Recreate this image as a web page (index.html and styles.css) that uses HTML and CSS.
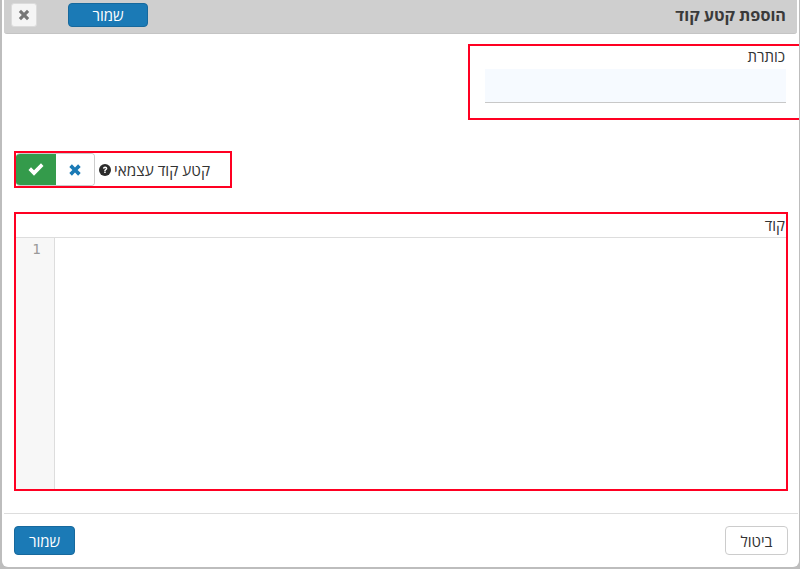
FILE: index.html
```html
<!DOCTYPE html>
<html lang="he" dir="rtl">
<head>
<meta charset="utf-8">
<title>הוספת קטע קוד</title>
<link rel="stylesheet" href="styles.css">
</head>
<body>
<div class="dialog">
  <header class="head">
    <h1 class="title">הוספת קטע קוד</h1>
    <div class="head-actions">
      <button class="btn primary small" type="button">שמור</button>
      <button class="close" type="button" aria-label="סגור">
        <svg viewBox="0 0 12 12" width="12" height="12"><path d="M.8 3 3 .8 6 3.800 9 .8 11.200 3 8.200 6 11.200 9 9 11.200 6 8.200 3 11.200 .8 9 3.800 6Z"/></svg>
      </button>
    </div>
  </header>
  <main class="body">
    <section class="field-title">
      <label class="label">כותרת</label>
      <div class="input"></div>
    </section>
    <section class="field-toggle">
      <span class="toggle-label">קטע קוד עצמאי</span>
      <svg class="help" viewBox="0 0 12 12" width="12" height="12"><circle cx="6" cy="6" r="6" fill="#2b2b2b"/><path d="M3.900 4.600C4 3.400 4.900 2.600 6.100 2.600 7.400 2.600 8.300 3.400 8.300 4.500 8.300 5.300 7.800 5.700 7.200 6.100 6.800 6.400 6.700 6.500 6.700 7H5.200C5.200 6.200 5.500 5.800 6.100 5.300 6.600 5 6.800 4.800 6.800 4.500 6.800 4.100 6.500 3.900 6.100 3.900 5.600 3.900 5.400 4.200 5.300 4.700ZM5.200 7.600H6.700V9.100H5.200Z" fill="#fff"/></svg>
      <div class="toggle">
        <span class="opt off">
          <svg viewBox="0 0 12 12" width="12" height="12"><path d="M.3 2.900 2.900.3 6 3.400 9.100.3 11.700 2.900 8.600 6 11.700 9.100 9.100 11.700 6 8.600 2.900 11.700.3 9.100 3.400 6Z"/></svg>
        </span>
        <span class="opt on">
          <svg viewBox="0 0 16 13" width="16" height="13"><path d="M.5 7 3 4.300 6 7.300 13 .3 15.500 3 6 12.700Z"/></svg>
        </span>
      </div>
    </section>
    <section class="field-code">
      <label class="label code-label">קוד</label>
      <div class="editor">
        <div class="gutter">1</div>
        <div class="code"></div>
      </div>
    </section>
  </main>
  <footer class="foot">
    <button class="btn cancel" type="button">ביטול</button>
    <button class="btn primary" type="button">שמור</button>
  </footer>
</div>
</body>
</html>
```
FILE: styles.css
```css
* { box-sizing: border-box; }
html, body { height: 100%; }
body {
  margin: 0;
  background: #bdbdbd;
  font-family: "Open Sans", "Liberation Sans", sans-serif;
  color: #333;
  overflow: hidden;
}
.dialog {
  height: 567px;
  margin: 0 1px 0 2px;
  padding: 0 2px;
  background: #fff;
  border-radius: 0 0 6px 6px;
  display: flex;
  flex-direction: column;
  overflow: hidden;
}
.head {
  height: 34px;
  flex: none;
  background: #cfcfcf;
  border-bottom: 1px solid #c4c4c4;
  border-radius: 0 0 3px 3px;
  display: flex;
  align-items: center;
  justify-content: space-between;
  padding: 0 11px 4px 7px;
}
.title {
  margin: 0;
  font-size: 16.2px;
  font-weight: 700;
  color: #3a3a3a;
}
.head-actions {
  display: flex;
  align-items: center;
  gap: 31px;
}
.btn {
  font-family: inherit;
  font-size: 15px;
  border-radius: 4px;
  padding: 0;
  cursor: pointer;
}
.primary {
  background: #1b7ab6;
  border: 1px solid #17699d;
  color: #fff;
  width: 61px;
  height: 29px;
}
.small {
  width: 80px;
  height: 24px;
  line-height: 20px;
}
.close {
  width: 26px;
  height: 24px;
  padding: 0;
  background: #f5f5f5;
  border: 1px solid #dcdcdc;
  border-radius: 3px;
  display: flex;
  align-items: center;
  justify-content: center;
}
.close svg { fill: #777; }
.body {
  flex: 1;
}
.label {
  display: block;
  font-size: 15px;
  line-height: 16px;
  color: #333;
}
.field-title {
  width: 332px;
  height: 76px;
  margin: 10px -3px 0 0;
  padding: 2px 14px 0 0;
  border: 2px solid #ff0022;
  border-right: 0;
}
.field-title .label { padding-right: 1px; }
.input {
  height: 34px;
  margin: 5px 0 0 15px;
  background: #f6faff;
  border-bottom: 1px solid #c8c8c8;
}
.field-toggle {
  width: 218px;
  height: 37px;
  margin: 31px auto 0 10px;
  border: 2px solid #ff0022;
  display: flex;
  align-items: center;
  padding-right: 20px;
  gap: 3px;
  font-size: 15.3px;
}
.toggle-label { white-space: nowrap; }
.help { flex: none; }
.toggle {
  display: flex;
  width: 79px;
  height: 100%;
  border: 1px solid #ccc;
  border-left: 0;
  border-radius: 4px;
  overflow: hidden;
  margin-right: auto;
}
.opt {
  display: flex;
  align-items: center;
  justify-content: center;
}
.opt.off { width: 38px; background: #fff; }
.opt.off svg { fill: #1b7ab6; }
.opt.on { width: 40px; background: #349b4b; }
.opt.on svg { fill: #fff; }
.field-code {
  height: 279px;
  margin: 24px 9px 0 10px;
  border: 2px solid #ff0022;
  display: flex;
  flex-direction: column;
}
.code-label {
  height: 23px;
  padding-top: 2px;
  line-height: 18px;
  flex: none;
  padding-right: 1px;
}
.editor {
  flex: 1;
  display: flex;
  flex-direction: row-reverse;
  justify-content: flex-end;
  border-top: 1px solid #ddd;
}
.gutter {
  width: 39px;
  background: #f7f7f7;
  border-right: 1px solid #ddd;
  color: #9a9a9a;
  font-family: "DejaVu Sans Mono", monospace;
  font-size: 14px;
  line-height: 23px;
  padding-left: 3px;
  text-align: center;
}
.code { flex: 1; background: #fff; }
.foot {
  height: 54px;
  margin-right: -1px;
  border-top: 1px solid #ddd;
  flex: none;
  display: flex;
  align-items: flex-start;
  justify-content: space-between;
  padding: 12px 10px 0 10px;
}
.cancel {
  width: 63px;
  height: 29px;
  background: #fff;
  border: 1px solid #ccc;
  color: #333;
}
```
